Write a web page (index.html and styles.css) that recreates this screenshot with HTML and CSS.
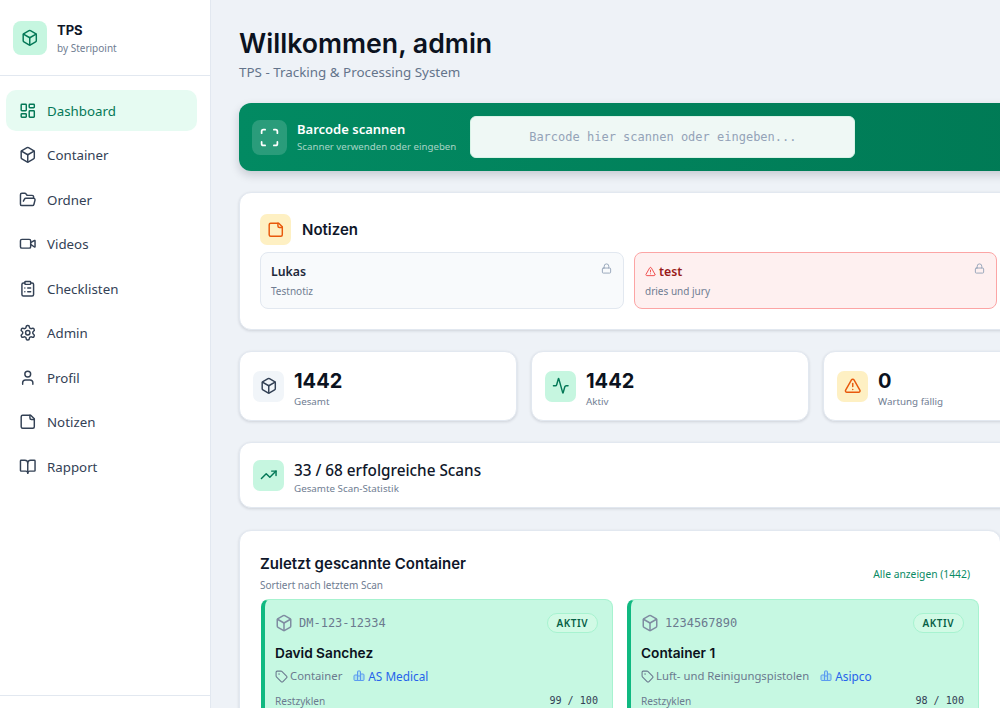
FILE: index.html
```html
<!DOCTYPE html>
<html lang="de">
<head>
    <meta charset="UTF-8">
    <meta name="viewport" content="width=device-width, initial-scale=1.0">
    <title>TPS Dashboard</title>
    <link rel="stylesheet" href="styles.css">
</head>
<body>
    <!-- Icon sprite -->
    <svg class="sprite" xmlns="http://www.w3.org/2000/svg">
        <symbol id="i-box" viewBox="0 0 24 24"><path d="M21 8a2 2 0 0 0-1-1.73l-7-4a2 2 0 0 0-2 0l-7 4A2 2 0 0 0 3 8v8a2 2 0 0 0 1 1.73l7 4a2 2 0 0 0 2 0l7-4A2 2 0 0 0 21 16Z"/><path d="m3.3 7 8.7 5 8.7-5"/><path d="M12 22V12"/></symbol>
        <symbol id="i-dashboard" viewBox="0 0 24 24"><rect x="3" y="3" width="7" height="9" rx="1"/><rect x="14" y="3" width="7" height="5" rx="1"/><rect x="14" y="12" width="7" height="9" rx="1"/><rect x="3" y="16" width="7" height="5" rx="1"/></symbol>
        <symbol id="i-folder" viewBox="0 0 24 24"><path d="m6 14 1.5-2.9A2 2 0 0 1 9.24 10H20a2 2 0 0 1 1.94 2.5l-1.54 6a2 2 0 0 1-1.95 1.5H4a2 2 0 0 1-2-2V5a2 2 0 0 1 2-2h3.9a2 2 0 0 1 1.69.9l.81 1.2a2 2 0 0 0 1.67.9H18a2 2 0 0 1 2 2v2"/></symbol>
        <symbol id="i-video" viewBox="0 0 24 24"><path d="m16 13 5.223 3.482a.5.5 0 0 0 .777-.416V7.87a.5.5 0 0 0-.752-.432L16 10.5"/><rect x="2" y="6" width="14" height="12" rx="2"/></symbol>
        <symbol id="i-clipboard" viewBox="0 0 24 24"><rect x="8" y="2" width="8" height="4" rx="1"/><path d="M16 4h2a2 2 0 0 1 2 2v14a2 2 0 0 1-2 2H6a2 2 0 0 1-2-2V6a2 2 0 0 1 2-2h2"/><path d="M12 11h4"/><path d="M12 16h4"/><path d="M8 11h.01"/><path d="M8 16h.01"/></symbol>
        <symbol id="i-settings" viewBox="0 0 24 24"><path d="M12.22 2h-.44a2 2 0 0 0-2 2v.18a2 2 0 0 1-1 1.73l-.43.25a2 2 0 0 1-2 0l-.15-.08a2 2 0 0 0-2.73.73l-.22.38a2 2 0 0 0 .73 2.73l.15.1a2 2 0 0 1 1 1.72v.51a2 2 0 0 1-1 1.74l-.15.09a2 2 0 0 0-.73 2.73l.22.38a2 2 0 0 0 2.73.73l.15-.08a2 2 0 0 1 2 0l.43.25a2 2 0 0 1 1 1.73V20a2 2 0 0 0 2 2h.44a2 2 0 0 0 2-2v-.18a2 2 0 0 1 1-1.73l.43-.25a2 2 0 0 1 2 0l.15.08a2 2 0 0 0 2.73-.73l.22-.39a2 2 0 0 0-.73-2.73l-.15-.08a2 2 0 0 1-1-1.74v-.5a2 2 0 0 1 1-1.74l.15-.09a2 2 0 0 0 .73-2.73l-.22-.38a2 2 0 0 0-2.73-.73l-.15.08a2 2 0 0 1-2 0l-.43-.25a2 2 0 0 1-1-1.73V4a2 2 0 0 0-2-2z"/><circle cx="12" cy="12" r="3"/></symbol>
        <symbol id="i-user" viewBox="0 0 24 24"><path d="M19 21v-2a4 4 0 0 0-4-4H9a4 4 0 0 0-4 4v2"/><circle cx="12" cy="7" r="4"/></symbol>
        <symbol id="i-note" viewBox="0 0 24 24"><path d="M16 3H5a2 2 0 0 0-2 2v14a2 2 0 0 0 2 2h14a2 2 0 0 0 2-2V8Z"/><path d="M15 3v4a2 2 0 0 0 2 2h4"/></symbol>
        <symbol id="i-book" viewBox="0 0 24 24"><path d="M12 7v14"/><path d="M3 18a1 1 0 0 1-1-1V4a1 1 0 0 1 1-1h5a4 4 0 0 1 4 4 4 4 0 0 1 4-4h5a1 1 0 0 1 1 1v13a1 1 0 0 1-1 1h-6a3 3 0 0 0-3 3 3 3 0 0 0-3-3z"/></symbol>
        <symbol id="i-scan" viewBox="0 0 24 24"><path d="M3 7V5a2 2 0 0 1 2-2h2"/><path d="M17 3h2a2 2 0 0 1 2 2v2"/><path d="M21 17v2a2 2 0 0 1-2 2h-2"/><path d="M7 21H5a2 2 0 0 1-2-2v-2"/></symbol>
        <symbol id="i-lock" viewBox="0 0 24 24"><rect x="3" y="11" width="18" height="11" rx="2"/><path d="M7 11V7a5 5 0 0 1 10 0v4"/></symbol>
        <symbol id="i-alert" viewBox="0 0 24 24"><path d="m21.73 18-8-14a2 2 0 0 0-3.48 0l-8 14A2 2 0 0 0 4 21h16a2 2 0 0 0 1.73-3"/><path d="M12 9v4"/><path d="M12 17h.01"/></symbol>
        <symbol id="i-activity" viewBox="0 0 24 24"><path d="M22 12h-2.48a2 2 0 0 0-1.93 1.46l-2.35 8.36a.25.25 0 0 1-.48 0L9.24 2.18a.25.25 0 0 0-.48 0l-2.35 8.36A2 2 0 0 1 4.49 12H2"/></symbol>
        <symbol id="i-trend" viewBox="0 0 24 24"><path d="M22 7 13.5 15.5 8.5 10.5 2 17"/><path d="M16 7h6v6"/></symbol>
        <symbol id="i-tag" viewBox="0 0 24 24"><path d="M12.586 2.586A2 2 0 0 0 11.172 2H4a2 2 0 0 0-2 2v7.172a2 2 0 0 0 .586 1.414l8.704 8.704a2.426 2.426 0 0 0 3.42 0l6.58-6.58a2.426 2.426 0 0 0 0-3.42z"/><circle cx="7.5" cy="7.5" r=".5"/></symbol>
        <symbol id="i-building" viewBox="0 0 24 24"><path d="M10 12h4a1 1 0 0 1 1 1v8H9V3a1 1 0 0 1 1-1h4a1 1 0 0 1 1 1v18"/><path d="M9 10H4a2 2 0 0 0-2 2v7a2 2 0 0 0 2 2h5"/><path d="M15 8h5a2 2 0 0 1 2 2v9a2 2 0 0 1-2 2h-5"/></symbol>
    </svg>

    <div class="app">
        <aside class="sidebar">
            <div class="brand">
                <div class="brand-icon"><svg class="icon"><use href="#i-box"/></svg></div>
                <div class="brand-text">
                    <div class="brand-name">TPS</div>
                    <div class="brand-sub">by Steripoint</div>
                </div>
            </div>
            <nav class="nav">
                <a class="nav-item active"><svg class="icon"><use href="#i-dashboard"/></svg>Dashboard</a>
                <a class="nav-item"><svg class="icon"><use href="#i-box"/></svg>Container</a>
                <a class="nav-item"><svg class="icon"><use href="#i-folder"/></svg>Ordner</a>
                <a class="nav-item"><svg class="icon"><use href="#i-video"/></svg>Videos</a>
                <a class="nav-item"><svg class="icon"><use href="#i-clipboard"/></svg>Checklisten</a>
                <a class="nav-item"><svg class="icon"><use href="#i-settings"/></svg>Admin</a>
                <a class="nav-item"><svg class="icon"><use href="#i-user"/></svg>Profil</a>
                <a class="nav-item"><svg class="icon"><use href="#i-note"/></svg>Notizen</a>
                <a class="nav-item"><svg class="icon"><use href="#i-book"/></svg>Rapport</a>
            </nav>
            <div class="sidebar-foot"></div>
        </aside>

        <main class="main">
            <h1>Willkommen, admin</h1>
            <p class="subtitle">TPS - Tracking &amp; Processing System</p>

            <section class="scan-bar">
                <div class="scan-icon"><svg class="icon icon-21"><use href="#i-scan"/></svg></div>
                <div class="scan-text">
                    <div class="scan-title">Barcode scannen</div>
                    <div class="scan-sub">Scanner verwenden oder eingeben</div>
                </div>
                <input class="scan-input" type="text" placeholder="Barcode hier scannen oder eingeben...">
            </section>

            <section class="card notes">
                <div class="notes-head">
                    <div class="tile tile-amber"><svg class="icon"><use href="#i-note"/></svg></div>
                    <h2>Notizen</h2>
                </div>
                <div class="notes-grid">
                    <div class="note">
                        <svg class="icon note-lock"><use href="#i-lock"/></svg>
                        <div class="note-name">Lukas</div>
                        <div class="note-text">Testnotiz</div>
                    </div>
                    <div class="note note-urgent">
                        <svg class="icon note-lock"><use href="#i-lock"/></svg>
                        <div class="note-name"><svg class="icon note-alert"><use href="#i-alert"/></svg>test</div>
                        <div class="note-text">dries und jury</div>
                    </div>
                </div>
            </section>

            <section class="stats">
                <div class="card stat">
                    <div class="tile tile-slate"><svg class="icon"><use href="#i-box"/></svg></div>
                    <div class="stat-body">
                        <div class="stat-value">1442</div>
                        <div class="stat-label">Gesamt</div>
                    </div>
                </div>
                <div class="card stat">
                    <div class="tile tile-green"><svg class="icon"><use href="#i-activity"/></svg></div>
                    <div class="stat-body">
                        <div class="stat-value">1442</div>
                        <div class="stat-label">Aktiv</div>
                    </div>
                </div>
                <div class="card stat">
                    <div class="tile tile-amber"><svg class="icon"><use href="#i-alert"/></svg></div>
                    <div class="stat-body">
                        <div class="stat-value">0</div>
                        <div class="stat-label">Wartung fällig</div>
                    </div>
                </div>
            </section>

            <section class="card stat stat-wide">
                <div class="tile tile-green"><svg class="icon"><use href="#i-trend"/></svg></div>
                <div class="stat-body">
                    <div class="scans-title">33 / 68 erfolgreiche Scans</div>
                    <div class="stat-label">Gesamte Scan-Statistik</div>
                </div>
            </section>

            <section class="card recent">
                <div class="recent-head">
                    <div>
                        <h2>Zuletzt gescannte Container</h2>
                        <div class="recent-sub">Sortiert nach letztem Scan</div>
                    </div>
                    <a class="recent-link">Alle anzeigen (1442)</a>
                </div>
                <div class="recent-grid">
                    <div class="item">
                        <div class="item-top">
                            <svg class="icon icon-18"><use href="#i-box"/></svg>
                            <span class="item-id">DM-123-12334</span>
                            <span class="pill">AKTIV</span>
                        </div>
                        <div class="item-name">David Sanchez</div>
                        <div class="item-meta">
                            <svg class="icon icon-13"><use href="#i-tag"/></svg><span>Container</span>
                            <span class="item-org"><svg class="icon org-icon"><use href="#i-building"/></svg>AS Medical</span>
                        </div>
                        <div class="item-cycles"><span>Restzyklen</span><span class="cycles-num">99 / 100</span></div>
                    </div>
                    <div class="item">
                        <div class="item-top">
                            <svg class="icon icon-18"><use href="#i-box"/></svg>
                            <span class="item-id">1234567890</span>
                            <span class="pill">AKTIV</span>
                        </div>
                        <div class="item-name">Container 1</div>
                        <div class="item-meta">
                            <svg class="icon icon-13"><use href="#i-tag"/></svg><span>Luft- und Reinigungspistolen</span>
                            <span class="item-org"><svg class="icon org-icon"><use href="#i-building"/></svg>Asipco</span>
                        </div>
                        <div class="item-cycles"><span>Restzyklen</span><span class="cycles-num">98 / 100</span></div>
                    </div>
                </div>
            </section>
        </main>
    </div>
</body>
</html>
```

FILE: styles.css
```css
* {
    box-sizing: border-box;
}
html, body {
    height: 100%;
}
body {
    margin: 0;
    font-family: "Noto Sans", sans-serif;
    font-size: 14px;
    color: #0f172a;
    background-color: #eef2f7;
    overflow: hidden;
}
.sprite {
    display: none;
}
.icon {
    width: 17.5px;
    height: 17.5px;
    flex-shrink: 0;
    fill: none;
    stroke: currentColor;
    stroke-width: 2;
    stroke-linecap: round;
    stroke-linejoin: round;
}
.icon-13 { width: 13px; height: 13px; }
.icon-18 { width: 18px; height: 18px; }
.icon-21 { width: 21px; height: 21px; }

.app {
    display: flex;
    height: 708px;
    overflow: hidden;
}

/* Sidebar */
.sidebar {
    width: 211px;
    flex-shrink: 0;
    display: flex;
    flex-direction: column;
    background-color: #fff;
    border-right: 1px solid #e2e8f0;
}
.brand {
    display: flex;
    align-items: center;
    gap: 10px;
    height: 76px;
    padding: 0 13px;
    border-bottom: 1px solid #e2e8f0;
}
.brand-icon {
    width: 34px;
    height: 34px;
    border-radius: 8px;
    display: flex;
    align-items: center;
    justify-content: center;
    background-color: #c6f6e0;
    color: #047857;
}
.brand-text {
    padding-top: 1px;
}
.brand-name {
    font-family: "Inter", sans-serif;
    font-size: 13px;
    font-weight: 700;
    line-height: 18px;
}
.brand-sub {
    margin-top: 2px;
    font-size: 10px;
    line-height: 15px;
    color: #6f7d92;
}
.nav {
    display: flex;
    flex-direction: column;
    gap: 3.5px;
    padding: 14px 13px 0 6px;
    flex: 1;
}
.nav-item {
    display: flex;
    align-items: center;
    gap: 10.5px;
    height: 41px;
    padding: 0 13px;
    border-radius: 10px;
    font-size: 13.3px;
    color: #334155;
}
.nav-item.active {
    background-color: #e6fbf2;
    color: #047857;
}
.sidebar-foot {
    height: 13px;
    border-top: 1px solid #e2e8f0;
}

/* Main */
.main {
    flex: 1;
    min-width: 0;
    padding: 28px 0 0 28px;
    overflow: hidden;
}
h1 {
    margin: 0;
    font-family: "Inter", sans-serif;
    font-size: 26.7px;
    font-weight: 600;
    line-height: 30px;
    color: #0b1220;
}
.subtitle {
    margin: 4px 0 0 0;
    font-size: 13.4px;
    line-height: 20px;
    color: #64748b;
}
h2 {
    margin: 0;
    font-family: "Inter", sans-serif;
    font-size: 15px;
    font-weight: 600;
}

.scan-bar {
    display: flex;
    align-items: center;
    width: 790px;
    height: 68px;
    margin-top: 21px;
    padding: 0 13px;
    border-radius: 12px;
    background: linear-gradient(90deg, #028a62, #007a55);
    box-shadow: 0 4px 10px rgba(15, 23, 42, 0.18);
    color: #fff;
}
.scan-icon {
    width: 35px;
    height: 35px;
    border-radius: 8px;
    display: flex;
    align-items: center;
    justify-content: center;
    background-color: rgba(255, 255, 255, 0.16);
}
.scan-text {
    margin-left: 10px;
}
.scan-title {
    font-size: 13px;
    font-weight: 600;
    line-height: 18px;
}
.scan-sub {
    margin-top: 1px;
    font-size: 9.7px;
    line-height: 15px;
    color: rgba(255, 255, 255, 0.65);
}
.scan-input {
    width: 385px;
    height: 42px;
    margin-left: 14px;
    padding: 0 14px;
    border: 1px solid #d9f3e7;
    border-radius: 6px;
    background-color: #eff8f5;
    font-family: "DejaVu Sans Mono", monospace;
    font-size: 12px;
    text-align: center;
    outline: none;
}
.scan-input::placeholder {
    color: #94a3b8;
    opacity: 1;
}

/* Cards */
.card {
    background-color: #fff;
    border: 1px solid #e2e8f0;
    border-radius: 12px;
    box-shadow: 0 1px 3px rgba(15, 23, 42, 0.14);
}
.notes {
    width: 790px;
    height: 138px;
    margin-top: 21px;
    padding: 21px 20px;
}
.notes-head {
    display: flex;
    align-items: center;
    gap: 11px;
}
.tile {
    width: 31px;
    height: 31px;
    flex-shrink: 0;
    border-radius: 7px;
    display: flex;
    align-items: center;
    justify-content: center;
}
.tile-amber { background-color: #fef0c3; color: #e8590c; }
.tile-green { background-color: #c6f6e0; color: #047857; }
.tile-slate { background-color: #f1f5f9; color: #334155; }
.notes-grid {
    display: grid;
    grid-template-columns: 364px 363px;
    gap: 10px;
    margin-top: 7px;
}
.note {
    position: relative;
    height: 57px;
    padding: 10px 10px;
    border: 1px solid #e2e8f0;
    border-radius: 8px;
    background-color: #f8fafc;
}
.note-urgent {
    border-color: #fca5a5;
    background-color: #fef0f0;
}
.note-lock {
    position: absolute;
    top: 10px;
    right: 11px;
    width: 11px;
    height: 11px;
    color: #94a3b8;
}
.note-alert {
    width: 11px;
    height: 11px;
    margin-right: 3px;
    color: #ef4444;
    vertical-align: -1px;
}
.note-name {
    font-size: 12.3px;
    font-weight: 600;
    line-height: 17px;
    color: #1e293b;
}
.note-urgent .note-name {
    color: #991b1b;
}
.note-text {
    margin-top: 4px;
    font-size: 10px;
    line-height: 14px;
    color: #6f7d92;
}

.stats {
    display: grid;
    grid-template-columns: repeat(3, 278px);
    gap: 14px;
    margin-top: 21px;
}
.stat {
    display: flex;
    align-items: center;
    gap: 10px;
    height: 70px;
    padding: 0 13px;
}
.stat-body {
    padding-top: 4px;
}
.stat-value {
    font-family: "Inter", sans-serif;
    font-size: 20px;
    font-weight: 700;
    line-height: 26px;
    color: #0b1220;
}
.stat-label {
    font-size: 9.8px;
    line-height: 15px;
    color: #6f7d92;
}
.stat-wide {
    width: 790px;
    height: 66px;
    margin-top: 21px;
}
.scans-title {
    font-size: 15.3px;
    font-weight: 500;
    line-height: 22px;
    color: #0f172a;
}

.recent {
    width: 762px;
    height: 300px;
    margin-top: 22px;
    padding: 21px 20px;
}
.recent-head {
    display: flex;
    justify-content: space-between;
    align-items: center;
    padding-right: 10px;
}
.recent-head h2 {
    line-height: 24px;
}
.recent-sub {
    margin-top: 2px;
    font-size: 10px;
    line-height: 15px;
    color: #6f7d92;
}
.recent-link {
    margin-top: 4px;
    font-size: 10.3px;
    line-height: 15px;
    color: #0a8a64;
}
.recent-grid {
    display: grid;
    grid-template-columns: repeat(2, 352px);
    gap: 14px;
    margin: 6px 0 0 1px;
}
.item {
    height: 170px;
    padding: 13px 14px 13px 10px;
    border: 1px solid #a7f3d0;
    border-left: 4px solid #10b981;
    border-radius: 8px;
    background-color: #c6f8e2;
}
.item-top {
    display: flex;
    align-items: center;
    gap: 6px;
    height: 19px;
    color: #7f8ca1;
}
.item-id {
    font-family: "DejaVu Sans Mono", monospace;
    font-size: 12px;
    color: #6b7a8f;
}
.pill {
    margin-left: auto;
    padding: 0 9px;
    border: 1px solid #a7f3d0;
    border-radius: 10px;
    background-color: #d1fae5;
    font-size: 10px;
    font-weight: 600;
    letter-spacing: 0.5px;
    line-height: 18px;
    color: #065f46;
}
.item-name {
    margin-top: 13px;
    font-family: "Inter", sans-serif;
    font-size: 13.7px;
    font-weight: 600;
    line-height: 17px;
    color: #0b1220;
}
.item-meta {
    display: flex;
    align-items: center;
    gap: 2px;
    margin-top: 5px;
    font-size: 11.3px;
    line-height: 18px;
    color: #6b7a8f;
}
.item-org {
    display: flex;
    align-items: center;
    gap: 3px;
    margin-left: 9px;
    font-size: 11.8px;
    color: #2563eb;
}
.org-icon {
    width: 12px;
    height: 12px;
    color: #5b9bf0;
    fill: rgba(96, 165, 250, 0.25);
}
.item-cycles {
    display: flex;
    justify-content: space-between;
    margin-top: 8px;
    font-size: 10.1px;
    line-height: 16px;
    color: #6b7a8f;
}
.cycles-num {
    font-family: "DejaVu Sans Mono", monospace;
    color: #334155;
}
```
